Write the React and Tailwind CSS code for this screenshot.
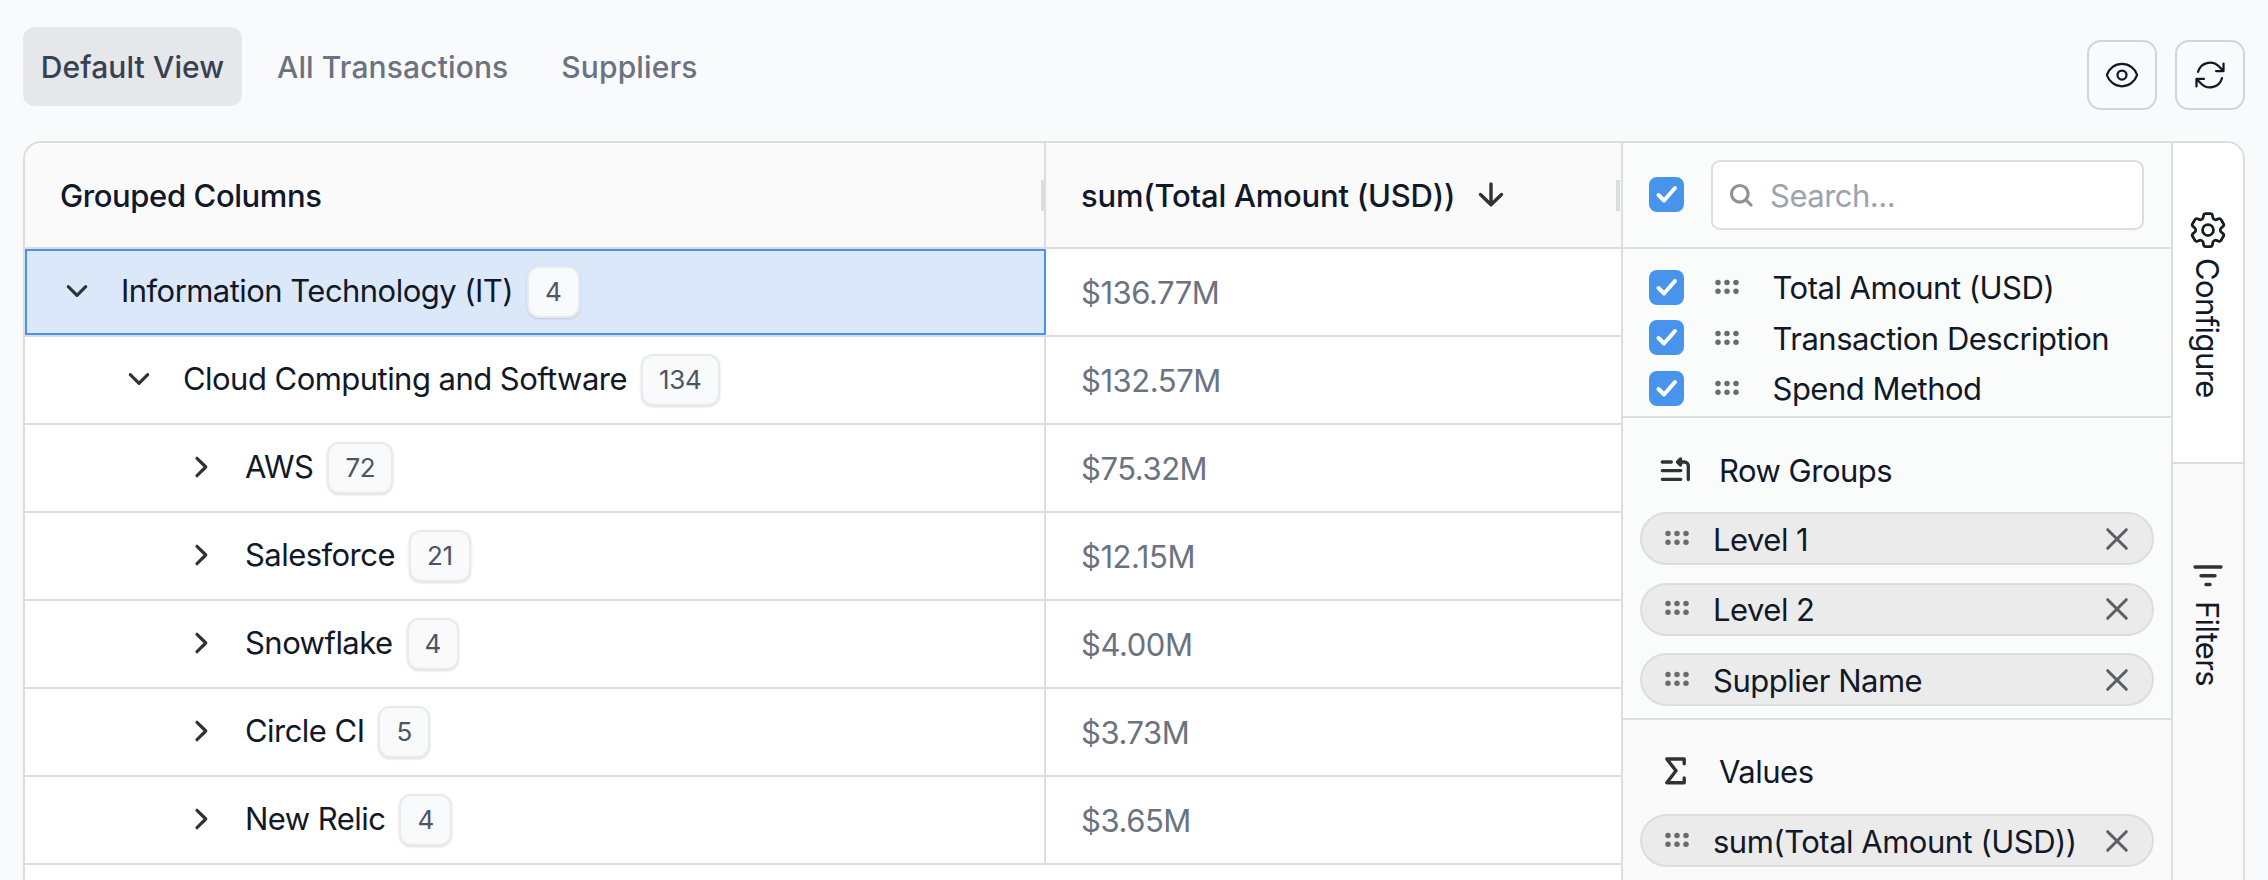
import React from "react";

const rows = [
  { label: "Information Technology (IT)", count: 4, value: "$136.77M", level: 0, open: true },
  { label: "Cloud Computing and Software", count: 134, value: "$132.57M", level: 1, open: true },
  { label: "AWS", count: 72, value: "$75.32M", level: 2 },
  { label: "Salesforce", count: 21, value: "$12.15M", level: 2 },
  { label: "Snowflake", count: 4, value: "$4.00M", level: 2 },
  { label: "Circle CI", count: 5, value: "$3.73M", level: 2 },
  { label: "New Relic", count: 4, value: "$3.65M", level: 2 },
];
const indents = ["pl-[34px]", "pl-[98px]", "pl-[160px]"];

const Stroke = ({ className, children, w = 3.4, vb = "0 0 32 32" }) => (
  <svg viewBox={vb} className={className} fill="none" stroke="currentColor" strokeWidth={w} strokeLinecap="round" strokeLinejoin="round">
    {children}
  </svg>
);
const Chevron = ({ open }) => (
  <Stroke className="size-8 shrink-0 text-[#2f3336]" w={3.2}>
    <path d={open ? "M7.3 10.7l8.700 8.700 8.700-8.700" : "M12 6.300l8.800 8.700-8.800 8.700"} />
  </Stroke>
);
const Grip = () => (
  <svg viewBox="0 0 24 16" className="h-4 w-6 shrink-0 fill-[#6b6b6b]">
    {[3, 12, 21].map((x) => [3.4, 12.2].map((y) => <circle key={`${x}-${y}`} cx={x} cy={y} r="2.75" />))}
  </svg>
);
const Check = () => (
  <span className="flex size-[35px] shrink-0 items-center justify-center rounded-[8px] bg-[#4894ec] text-white">
    <Stroke className="size-[35px]" w={4} vb="0 0 35 35"><path d="M9.500 18l5.500 5.500 11-12.500" /></Stroke>
  </span>
);
const Pill = ({ children, className }) => (
  <div className={`flex h-[53px] items-center rounded-full border-2 border-[#dcdddd] bg-[#ebebeb] pl-[23px] ${className || ""}`}>
    <span className="mb-0.5 flex"><Grip /></span>
    <span className="ml-[24px] flex-1 whitespace-nowrap pt-0.5">{children}</span>
    <Stroke className="mr-[19px] size-8 text-[#5c5f60]" w={3}><path d="M6.700 6.700l18.600 18.600M25.300 6.700l-18.600 18.600" /></Stroke>
  </div>
);

export default function App() {
  return (
    <div className="flex h-[880px] w-[2268px] flex-col overflow-hidden bg-[#f9fafb] px-[23px] font-['Inter',sans-serif] text-[31px] leading-10 tracking-[-0.5px] text-[#111827]">
      <div className="flex h-[141px] shrink-0 justify-between">
        <nav className="mt-[27px] flex h-[79px] items-center text-[30px] font-medium tracking-[0.12px] text-[#6b7280]">
          <span className="flex h-full w-[219px] items-center justify-center rounded-[12px] bg-[#e5e7eb] text-[#374151]">Default View</span>
          <span className="ml-[35px]">All Transactions</span>
          <span className="ml-[53px]">Suppliers</span>
        </nav>
        <div className="mt-10 flex gap-[18px]">
          <button className="flex size-[70px] items-center justify-center rounded-[14px] border-2 border-[#d1d5db]">
            <Stroke className="size-9" w={1.5} vb="0 0 24 24">
              <path d="M2.036 12.322a1.012 1.012 0 0 1 0-.639C3.423 7.51 7.36 4.5 12 4.5c4.638 0 8.573 3.007 9.963 7.178.07.207.07.431 0 .639C20.577 16.49 16.64 19.5 12 19.5c-4.638 0-8.573-3.007-9.963-7.178Z" />
              <path d="M15 12a3 3 0 1 1-6 0 3 3 0 0 1 6 0Z" />
            </Stroke>
          </button>
          <button className="flex size-[70px] items-center justify-center rounded-[14px] border-2 border-[#d1d5db]">
            <Stroke className="size-9" w={1.5} vb="0 0 24 24">
              <path d="M16.023 9.348h4.992v-.001M2.985 19.644v-4.992m0 0h4.992m-4.993 0 3.181 3.183a8.25 8.25 0 0 0 13.803-3.7M4.031 9.865a8.25 8.25 0 0 1 13.803-3.7l3.181 3.182m0-4.991v4.99" />
            </Stroke>
          </button>
        </div>
      </div>

      <div className="flex h-[760px] shrink-0 overflow-hidden rounded-t-[18px] border-2 border-[#dcdddd] bg-white">
        <div className="w-[1596px] shrink-0">
          <div className="flex h-[106px] border-b-2 border-[#dcdddd] bg-[#fafafa] font-medium tracking-[-0.4px]">
            <div className="flex w-[1021px] items-center justify-between border-r-2 border-[#dcdddd] pl-[35px]">
              <span className="pt-0.5">Grouped Columns</span>
              <span className="h-[31px] w-[3px] bg-[#dcdddd]" />
            </div>
            <div className="flex flex-1 items-center pl-[35px]">
              <span className="pt-0.5 tracking-[-0.22px]">sum(Total Amount (USD))</span>
              <Stroke className="ml-[20px] size-8 text-[#2f3336]"><path d="M16 5v20.500M5.500 15.500l10.500 10.300 10.500-10.300" /></Stroke>
              <span className="ml-auto mr-px h-[31px] w-1 bg-[#dcdddd]" />
            </div>
          </div>
          {rows.map((r, i) => (
            <div key={r.label} className="flex h-[88px] border-b-2 border-[#dcdddd]">
              <div className={`flex w-[1021px] items-center ${i === 0 ? "border-2 border-[#4894ec] bg-[#dbe8fa]" : "border-r-2 border-[#dcdddd]"}`}>
                <div className={`flex items-center ${indents[r.level]}`}>
                  <Chevron open={r.open} />
                  <span className="ml-[28px] whitespace-nowrap pb-[3px] tracking-[-0.54px]">{r.label}</span>
                  <span className="ml-[14px] flex h-[52px] items-center rounded-[12px] border-2 border-[#e9eaec] bg-[#f9fafb] px-[16px] text-[26px] tracking-[-0.3px] text-[#4b5563] shadow-sm">{r.count}</span>
                </div>
              </div>
              <div className="flex flex-1 items-center pl-[35px] pt-0.5 tracking-[-0.45px] text-[#6b7280]">{r.value}</div>
            </div>
          ))}
        </div>

        <div className="w-[552px] shrink-0 border-x-2 border-[#dcdddd] bg-[#fafcfb]">
          <div className="flex h-[106px] items-center border-b-2 border-[#dcdddd] pl-[26px]">
            <span className="mb-0.5 flex"><Check /></span>
            <div className="ml-[27px] flex h-[70px] w-[433px] items-center rounded-[9px] border-2 border-[#dcdddd] bg-white pl-[16px] text-[#9ca3af]">
              <Stroke className="size-6 text-[#929292]" w={3.1} vb="0 0 24 24"><circle cx="10.800" cy="10.800" r="8.300" /><path d="M17.200 17.200l4.800 4.800" /></Stroke>
              <span className="ml-[17px] pt-0.5">Search...</span>
            </div>
          </div>
          <div className="flex h-[169px] flex-col border-b-2 border-[#dcdddd] pl-[26px] pt-[13px]">
            {["Total Amount (USD)", "Transaction Description", "Spend Method"].map((t) => (
              <div key={t} className="flex h-[50.500px] items-center">
                <Check />
                <span className="ml-[31px] flex"><Grip /></span>
                <span className="ml-[33.500px] whitespace-nowrap pt-0.5">{t}</span>
              </div>
            ))}
          </div>
          <div className="h-[302px] border-b-2 border-[#dcdddd] px-[17px] pt-[32px]">
            <div className="flex h-10 items-center pl-[18px]">
              <Stroke className="size-8 overflow-visible text-[#2f3336]" w={3.3}>
                <path d="M4.300 8h9M4.300 16.600h18.500M4.300 25.300h18.500M22 8h4.500a3.800 3.800 0 0 1 3.800 3.800v13.800" />
                <path d="M19.500 8l3-3v6z" fill="currentColor" />
              </Stroke>
              <span className="ml-[29px] pt-px">Row Groups</span>
            </div>
            <div className="mt-[22px] flex flex-col gap-[17.500px]">
              <Pill>Level 1</Pill><Pill>Level 2</Pill><Pill>Supplier Name</Pill>
            </div>
          </div>
          <div className="h-[300px] bg-[#fafafa] px-[17px] pt-[32px]">
            <div className="flex h-10 items-center pl-[18px]">
              <Stroke className="size-8 text-[#2f3336]"><path d="M26.200 7.800V3H8.800l9.200 11.800-9.200 11.900h17.400v-4.800" /></Stroke>
              <span className="ml-[29px]">Values</span>
            </div>
            <Pill className="mt-[22px]">sum(Total Amount (USD))</Pill>
          </div>
        </div>

        <div className="flex w-[70px] shrink-0 flex-col">
          <div className="flex h-[321px] flex-col items-center border-b-2 border-[#dcdddd] bg-white pt-[65px]">
            <Stroke className="size-11 text-[#181d1f]" w={1.500} vb="0 0 24 24">
              <path d="M9.594 3.940c.090-.542.560-.940 1.110-.940h2.593c.550 0 1.020.398 1.110.940l.213 1.281c.063.374.313.686.645.870.074.040.147.083.220.127.325.196.720.257 1.075.124l1.217-.456a1.125 1.125 0 0 1 1.370.490l1.296 2.247a1.125 1.125 0 0 1-.260 1.431l-1.003.827c-.293.241-.438.613-.430.992a7.723 7.723 0 0 1 0 .255c-.008.378.137.750.430.991l1.004.827c.424.350.534.955.260 1.430l-1.298 2.247a1.125 1.125 0 0 1-1.369.491l-1.217-.456c-.355-.133-.750-.072-1.076.124a6.470 6.470 0 0 1-.220.128c-.331.183-.581.495-.644.869l-.213 1.281c-.090.543-.560.940-1.110.940h-2.594c-.550 0-1.019-.398-1.110-.940l-.213-1.281c-.062-.374-.312-.686-.644-.870a6.520 6.520 0 0 1-.220-.127c-.325-.196-.720-.257-1.076-.124l-1.217.456a1.125 1.125 0 0 1-1.369-.490l-1.297-2.247a1.125 1.125 0 0 1 .260-1.431l1.004-.827c.292-.240.437-.613.430-.991a6.932 6.932 0 0 1 0-.255c.007-.380-.138-.751-.430-.992l-1.004-.827a1.125 1.125 0 0 1-.260-1.430l1.297-2.247a1.125 1.125 0 0 1 1.370-.491l1.216.456c.356.133.751.072 1.076-.124.072-.044.146-.086.220-.128.332-.183.582-.495.644-.869l.214-1.280Z" />
              <circle cx="12" cy="12" r="3" />
            </Stroke>
            <span className="mr-[2px] mt-[6px] tracking-[-0.6px] [writing-mode:vertical-rl]">Configure</span>
          </div>
          <div className="flex flex-1 flex-col items-center bg-[#fafafa] pt-[96px]">
            <Stroke className="size-8 text-[#2f3336]"><path d="M3 7h26M9 15.800h14M14 24.500h4" /></Stroke>
            <span className="mr-[2px] mt-[9px] tracking-[-0.7px] [writing-mode:vertical-rl]">Filters</span>
          </div>
        </div>
      </div>
    </div>
  );
}
